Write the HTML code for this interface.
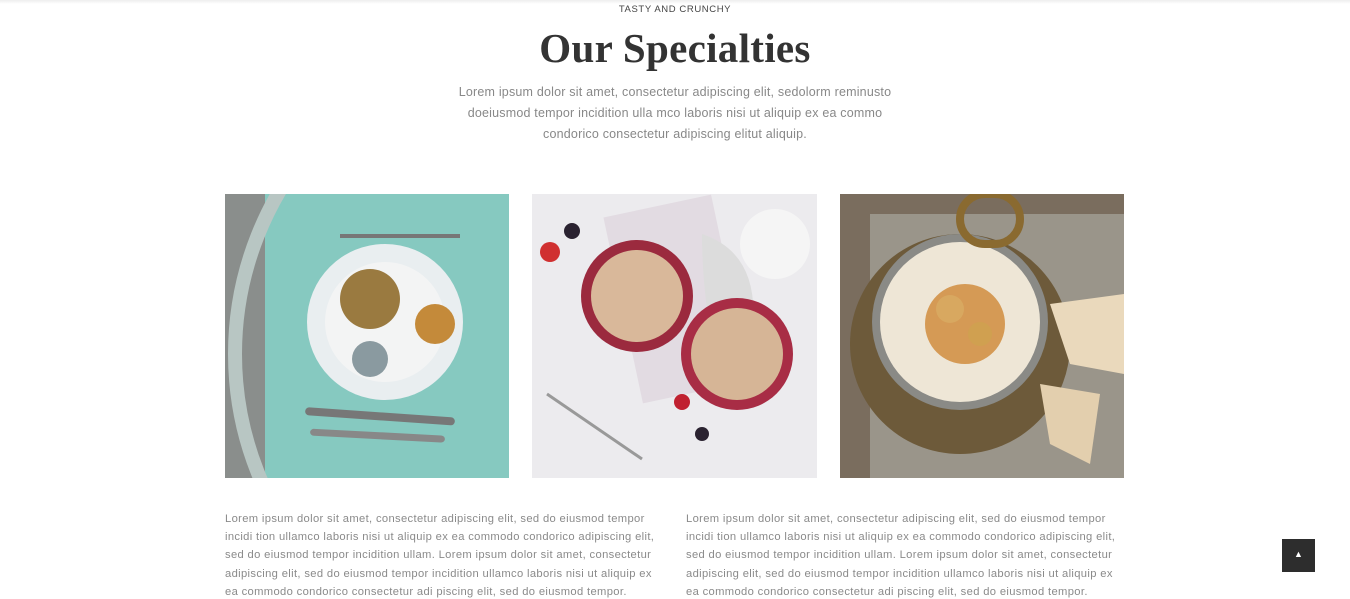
<!DOCTYPE html>
<html><head><meta charset="utf-8"><style>
*{margin:0;padding:0;box-sizing:border-box}
body{width:1350px;height:599px;overflow:hidden;background:#fff;font-family:"Liberation Sans",sans-serif;position:relative}
.top{position:absolute;top:0;left:0;width:1350px;height:4px;background:linear-gradient(#eee,#fff)}
.sub{position:absolute;top:4px;left:0;width:1350px;text-align:center;font-size:9.5px;letter-spacing:0.6px;color:#444}
h1{position:absolute;top:24px;left:0;width:1350px;text-align:center;font-family:"Liberation Serif",serif;font-weight:bold;font-size:41px;color:#333;letter-spacing:0.3px}
.lead{position:absolute;top:82px;left:340px;width:670px;text-align:center;font-size:12.5px;line-height:21px;color:#888;letter-spacing:0.2px;white-space:nowrap}
.img{position:absolute;top:194px;width:285px;height:284px;overflow:hidden}
.col{position:absolute;top:510px;width:460px;height:89px;overflow:hidden;font-size:11.2px;line-height:18.2px;color:#8a8a8a;letter-spacing:0.35px;white-space:nowrap}
.btn{position:absolute;left:1282px;top:539px;width:33px;height:33px;background:#2d2d2d;color:#fff;font-size:9px;text-align:center;line-height:31px}
</style></head><body>
<div class="top"></div>
<div class="sub">TASTY AND CRUNCHY</div>
<h1>Our Specialties</h1>
<div class="lead">Lorem ipsum dolor sit amet, consectetur adipiscing elit, sedolorm reminusto<br>doeiusmod tempor incidition ulla mco laboris nisi ut aliquip ex ea commo<br>condorico consectetur adipiscing elitut aliquip.</div>

<div class="img" style="left:225px;width:284px;background:#7fc3bb">
<svg width="284" height="284"><rect width="284" height="284" fill="#86c9c0"/><rect width="40" height="284" fill="#8a8e8c"/><circle cx="330" cy="160" r="320" fill="none" stroke="#b8c6c3" stroke-width="14"/><circle cx="160" cy="128" r="78" fill="#e9eef0"/><circle cx="160" cy="128" r="60" fill="#f3f4f4"/><circle cx="145" cy="105" r="30" fill="#9a7a40"/><circle cx="210" cy="130" r="20" fill="#c48a3a"/><circle cx="145" cy="165" r="18" fill="#8a9aa0"/><rect x="80" y="218" width="150" height="8" rx="4" fill="#777" transform="rotate(4 150 222)"/><rect x="85" y="238" width="135" height="7" rx="4" fill="#888" transform="rotate(3 150 242)"/><rect x="115" y="40" width="120" height="4" fill="#777"/></svg></div>

<div class="img" style="left:532px">
<svg width="285" height="284"><rect width="285" height="284" fill="#ecebee"/><rect x="90" y="10" width="110" height="190" fill="#e2dbe2" transform="rotate(-12 145 105)"/><circle cx="243" cy="50" r="35" fill="#f5f5f5"/><path d="M170 40 Q230 60 220 140 L180 150 Q170 90 170 40Z" fill="#dcdcdc"/><circle cx="105" cy="102" r="56" fill="#9b2a3e"/><circle cx="105" cy="102" r="46" fill="#d9b89a"/><circle cx="205" cy="160" r="56" fill="#a82d45"/><circle cx="205" cy="160" r="46" fill="#d6b596"/><circle cx="18" cy="58" r="10" fill="#d03030"/><circle cx="40" cy="37" r="8" fill="#2a2230"/><circle cx="150" cy="208" r="8" fill="#c02030"/><circle cx="170" cy="240" r="7" fill="#2a2230"/><line x1="15" y1="200" x2="110" y2="265" stroke="#999" stroke-width="3"/></svg></div>

<div class="img" style="left:840px;width:284px">
<svg width="284" height="284"><rect width="284" height="284" fill="#7a6d5e"/><rect x="30" y="20" width="254" height="264" fill="#9a958a"/><circle cx="120" cy="150" r="110" fill="#6d5a3a"/><circle cx="120" cy="128" r="88" fill="#8a8a86"/><circle cx="120" cy="128" r="80" fill="#eee6d6"/><circle cx="125" cy="130" r="40" fill="#d59a55"/><circle cx="110" cy="115" r="14" fill="#d8a860"/><circle cx="140" cy="140" r="12" fill="#d0a050"/><path d="M210 110 L284 100 L284 180 L230 170Z" fill="#ead9bc"/><path d="M200 190 L260 200 L250 270 L210 250Z" fill="#e3cfae"/><rect x="120" y="0" width="60" height="50" rx="25" fill="none" stroke="#8a6a30" stroke-width="8"/></svg></div>

<div class="col" style="left:225px">Lorem ipsum dolor sit amet, consectetur adipiscing elit, sed do eiusmod tempor<br>incidi tion ullamco laboris nisi ut aliquip ex ea commodo condorico adipiscing elit,<br>sed do eiusmod tempor incidition ullam. Lorem ipsum dolor sit amet, consectetur<br>adipiscing elit, sed do eiusmod tempor incidition ullamco laboris nisi ut aliquip ex<br>ea commodo condorico consectetur adi piscing elit, sed do eiusmod tempor.</div>
<div class="col" style="left:686px">Lorem ipsum dolor sit amet, consectetur adipiscing elit, sed do eiusmod tempor<br>incidi tion ullamco laboris nisi ut aliquip ex ea commodo condorico adipiscing elit,<br>sed do eiusmod tempor incidition ullam. Lorem ipsum dolor sit amet, consectetur<br>adipiscing elit, sed do eiusmod tempor incidition ullamco laboris nisi ut aliquip ex<br>ea commodo condorico consectetur adi piscing elit, sed do eiusmod tempor.</div>
<div class="btn">&#9650;</div>
</body></html>
